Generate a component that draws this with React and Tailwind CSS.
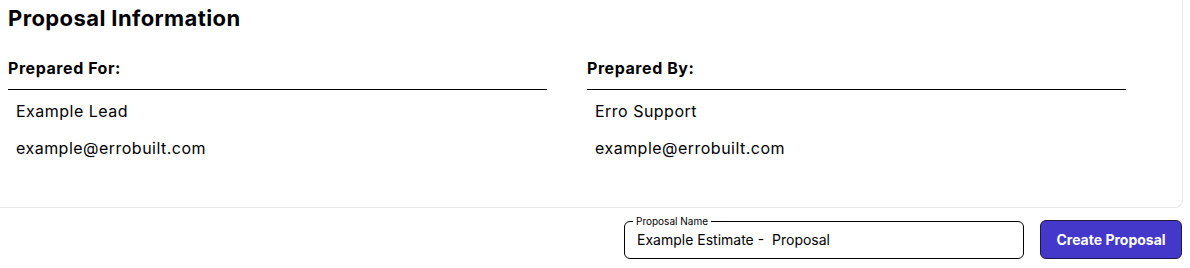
const Party = ({ label, name, email }) => (
  <div>
    <h3 className="border-b border-black pb-[9px] text-base font-bold leading-6 tracking-[0.035em]">{label}</h3>
    <div className="flex flex-col gap-[13px] pl-2 pt-[9px] text-base leading-6 tracking-[0.03em]">
      <p>{name}</p>
      <p>{email}</p>
    </div>
  </div>
);

export default function App() {
  return (
    <div className="h-[268px] w-[1190px] bg-white font-['Inter','Liberation_Sans',sans-serif] text-black">
      <div className="h-[208px] w-[1183px] rounded-br-lg border-r border-b border-gray-200 pl-2 pt-1">
        <h2 className="text-[22px] font-bold leading-7 tracking-[0.018em]">Proposal Information</h2>
        <div className="mt-6 grid grid-cols-[539px_539px] gap-x-10">
          <Party label="Prepared For:" name="Example Lead" email="example@errobuilt.com" />
          <Party label="Prepared By:" name="Erro Support" email="example@errobuilt.com" />
        </div>
      </div>

      <div className="mt-3 flex items-start justify-end gap-4 pr-2">
        <div className="relative mt-px h-[38px] w-[400px] rounded-md border border-black">
          <span className="absolute -top-[8px] left-[8px] bg-white px-[3px] text-[10px] leading-[14px] text-black">
            Proposal Name
          </span>
          <div className="flex h-full items-center whitespace-pre pl-3 text-sm">Example Estimate -  Proposal</div>
        </div>
        <button className="h-[39px] w-[142px] rounded-md border border-[#1e1b4b] bg-[#4338ca] text-sm font-bold text-white">
          Create Proposal
        </button>
      </div>
    </div>
  );
}
